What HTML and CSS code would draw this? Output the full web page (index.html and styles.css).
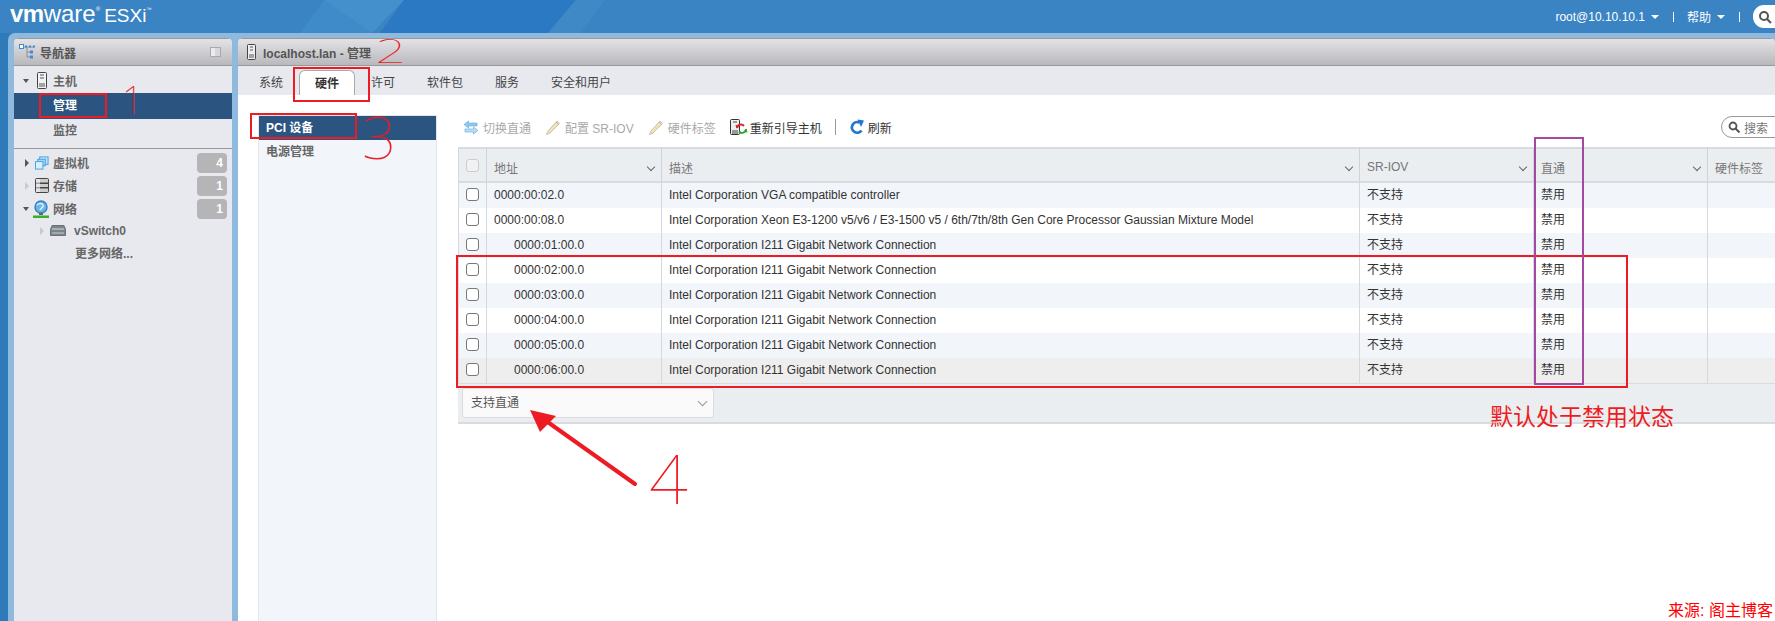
FILE: index.html
```html
<!DOCTYPE html>
<html>
<head>
  <meta charset="utf-8">
  <title>VMware ESXi</title>
  <link rel="stylesheet" href="styles.css">
</head>
<body>
  <div class="page">
    <header class="topbar">
      <svg class="topbar-art" width="1775" height="33" viewBox="0 0 1775 33">
        <polygon points="300,33 324,0 372,33" fill="#3f8bca"/>
        <polygon points="324,0 404,0 372,33" fill="#4390cd"/>
        <polygon points="404,0 576,0 548,33 380,33" fill="#2b78c3"/>
        <polygon points="576,0 605,0 580,33 548,33" fill="#3f89c6"/>
      </svg>
      <div class="logo"><span class="logo-vm">vm</span><span class="logo-ware">ware</span><span class="logo-reg">®</span><span class="logo-esxi">ESXi</span><span class="logo-tm">™</span></div>
      <div class="top-menu">
        <span class="top-item">root@10.10.10.1<i class="caret-white"></i></span>
        <span class="top-sep"></span>
        <span class="top-item">帮助<i class="caret-white"></i></span>
        <span class="top-sep"></span>
        <span class="top-search">
          <svg width="14" height="14" viewBox="0 0 14 14"><circle cx="6" cy="6" r="4" fill="none" stroke="#555" stroke-width="2"/><path d="M9 9l4 4" stroke="#555" stroke-width="2.2"/></svg>
        </span>
      </div>
    </header>

    <div class="frame">
      <aside class="panel nav-panel">
        <div class="panel-title">
          <svg class="nav-title-icon" width="17" height="16" viewBox="0 0 17 16">
            <path d="M5 3h10M8 3v10h3M8 8h3" fill="none" stroke="#8a8f98"/>
            <rect x="0.5" y="0.5" width="4" height="4" fill="#fff" stroke="#3d8bd8"/>
            <rect x="6" y="1.5" width="2" height="2" fill="#3d8bd8"/><rect x="10" y="1.5" width="2" height="2" fill="#3d8bd8"/><rect x="14" y="1.5" width="2" height="2" fill="#3d8bd8"/>
            <rect x="11" y="6.5" width="3" height="3" fill="#3d8bd8"/><rect x="11" y="11.5" width="3" height="3" fill="#3d8bd8"/>
          </svg>
          <span>导航器</span>
          <svg class="pin-icon" width="11" height="10" viewBox="0 0 11 10"><rect x="0.5" y="0.5" width="10" height="9" fill="#d8d8da" stroke="#a9a9ad"/><rect x="1" y="1" width="4" height="8" fill="#ececee"/></svg>
        </div>
        <div class="tree-group">
          <div class="tree-row">
            <i class="arrow-down"></i>
            <svg class="tree-icon" width="10" height="17" viewBox="0 0 10 17"><rect x="0.5" y="0.5" width="9" height="16" rx="1" fill="#f2f2f2" stroke="#444"/><path d="M3 3h4M3 6h4M2 12h6M2 14h6" stroke="#555"/></svg>
            <span>主机</span>
          </div>
          <div class="tree-row tree-sub active"><span>管理</span></div>
          <div class="tree-row tree-sub"><span>监控</span></div>
        </div>
        <div class="tree-group tree-group-last">
          <div class="tree-row">
            <i class="arrow-right"></i>
            <svg class="tree-icon" width="15" height="14" viewBox="0 0 15 14"><rect x="5" y="0.5" width="9" height="8" fill="#bfe2fa" stroke="#3fa0e0"/><rect x="3" y="3" width="8" height="7" fill="#a8d6f6" stroke="#3fa0e0"/><rect x="0.5" y="5.5" width="8" height="8" fill="#d9effc" stroke="#3fa0e0"/></svg>
            <span>虚拟机</span>
            <b class="count">4</b>
          </div>
          <div class="tree-row">
            <i class="arrow-right faint"></i>
            <svg class="tree-icon" width="14" height="15" viewBox="0 0 14 15"><rect x="0.5" y="0.5" width="13" height="14" rx="1" fill="#ccc" stroke="#444"/><path d="M1 5.2h12M1 9.8h12" stroke="#444" stroke-width="1.4"/><rect x="1" y="1" width="4" height="13" fill="#fff" opacity=".5"/></svg>
            <span>存储</span>
            <b class="count">1</b>
          </div>
          <div class="tree-row">
            <i class="arrow-down"></i>
            <svg class="tree-icon tree-icon-globe" width="16" height="18" viewBox="0 0 16 18"><circle cx="8" cy="7" r="6" fill="#6fb4e4" stroke="#2f80c8" stroke-width="1.4"/><path d="M4 5c2-2 5-2 6 0s-2 3-3 5" fill="none" stroke="#d7effc" stroke-width="1.6"/><path d="M6 13h4v2H6z" fill="#666"/><rect y="15.500" width="16" height="2.500" fill="#3cae2b"/></svg>
            <span>网络</span>
            <b class="count">1</b>
          </div>
          <div class="tree-row tree-child">
            <i class="arrow-right faint"></i>
            <svg class="tree-icon-wide" width="16" height="11" viewBox="0 0 16 11"><path d="M2 0.500h12l1.500 4v6H0.500v-6z" fill="#7d858c" stroke="#6a7178"/><path d="M2 4h12" stroke="#a9b0b6" stroke-width="2"/><path d="M2 8h12" stroke="#c7ccd0"/></svg>
            <span>vSwitch0</span>
          </div>
          <div class="tree-row tree-more"><span>更多网络...</span></div>
        </div>
      </aside>

      <main class="panel main-panel">
        <div class="panel-title main-title">
          <svg width="9" height="16" viewBox="0 0 9 16"><rect x="0.5" y="0.5" width="8" height="15" rx="1" fill="#eee" stroke="#444"/><path d="M3 3h3M3 6h3M2 11h5M2 13h5" stroke="#555"/></svg>
          <span>localhost.lan - 管理</span>
        </div>
        <nav class="tabs">
          <span class="tab">系统</span>
          <span class="tab tab-on">硬件</span>
          <span class="tab">许可</span>
          <span class="tab">软件包</span>
          <span class="tab">服务</span>
          <span class="tab">安全和用户</span>
        </nav>

        <div class="main-body">
          <div class="side-list">
            <div class="side-item active">PCI 设备</div>
            <div class="side-item">电源管理</div>
          </div>

          <section class="content">
            <div class="toolbar">
              <span class="tb-btn off">
                <svg width="14" height="15" viewBox="0 0 14 15"><path d="M0 4.500L4.500 1v2H13v3H4.500v2z" fill="#8fc8ee" stroke="#5eaade" stroke-width=".6"/><path d="M14 10.500L9.500 7v2H1v3h8.500v2z" fill="#b9def5" stroke="#5eaade" stroke-width=".6"/></svg>
                切换直通
              </span>
              <span class="tb-btn off">
                <svg width="14" height="15" viewBox="0 0 14 15"><path d="M11 1l2.500 2.500L4 13l-3.500 1.500L2 11z" fill="#f1e3b8" stroke="#c8c2a8"/><path d="M10 2l2.500 2.500" stroke="#b9b5a8"/></svg>
                配置 SR-IOV
              </span>
              <span class="tb-btn off">
                <svg width="14" height="15" viewBox="0 0 14 15"><path d="M11 1l2.500 2.500L4 13l-3.500 1.500L2 11z" fill="#f1e3b8" stroke="#c8c2a8"/><path d="M10 2l2.500 2.500" stroke="#b9b5a8"/></svg>
                硬件标签
              </span>
              <span class="tb-btn tb-reboot">
                <svg width="18" height="17" viewBox="0 0 18 17"><rect x="0.500" y="0.500" width="9" height="15" rx="1" fill="#eee" stroke="#333"/><path d="M2 12h6M2 14h6M3 3h4" stroke="#444"/><path d="M7 9a4 4 0 0 1 7-2" fill="none" stroke="#d9262a" stroke-width="2"/><path d="M5.500 6l4 .5-3 3z" fill="#d9262a"/><path d="M16 10a4 4 0 0 1-7 2.500" fill="none" stroke="#2fa637" stroke-width="2"/><path d="M17.500 13.500l-4-.5 3-3z" fill="#2fa637"/></svg>
                重新引导主机
              </span>
              <span class="tb-sep"></span>
              <span class="tb-btn tb-refresh">
                <svg width="16" height="16" viewBox="0 0 16 16"><path d="M12.500 11.500A5.300 5.300 0 1 1 10.500 3.600" fill="none" stroke="#1f78d1" stroke-width="2.800"/><path d="M8.500 0.500L15 1.500 12 8z" fill="#1f78d1"/></svg>
                刷新
              </span>
              <span class="tb-search">
                <svg width="12" height="12" viewBox="0 0 12 12"><circle cx="5" cy="5" r="3.500" fill="none" stroke="#555" stroke-width="1.800"/><path d="M7.500 7.500l4 4" stroke="#555" stroke-width="2"/></svg>
                搜索
              </span>
            </div>

            <table class="grid">
              <thead>
                <tr>
                  <th class="col-check"><i class="box box-head"></i></th>
                  <th class="col-addr">地址<i class="chev"></i></th>
                  <th class="col-desc">描述<i class="chev"></i></th>
                  <th class="col-sriov">SR-IOV<i class="chev"></i></th>
                  <th class="col-pass">直通<i class="chev"></i></th>
                  <th class="col-tag">硬件标签</th>
                </tr>
              </thead>
              <tbody>
                <tr><td><i class="box"></i></td><td>0000:00:02.0</td><td>Intel Corporation VGA compatible controller</td><td>不支持</td><td>禁用</td><td></td></tr>
                <tr><td><i class="box"></i></td><td>0000:00:08.0</td><td>Intel Corporation Xeon E3-1200 v5/v6 / E3-1500 v5 / 6th/7th/8th Gen Core Processor Gaussian Mixture Model</td><td>不支持</td><td>禁用</td><td></td></tr>
                <tr><td><i class="box"></i></td><td class="indent">0000:01:00.0</td><td>Intel Corporation I211 Gigabit Network Connection</td><td>不支持</td><td>禁用</td><td></td></tr>
                <tr><td><i class="box"></i></td><td class="indent">0000:02:00.0</td><td>Intel Corporation I211 Gigabit Network Connection</td><td>不支持</td><td>禁用</td><td></td></tr>
                <tr><td><i class="box"></i></td><td class="indent">0000:03:00.0</td><td>Intel Corporation I211 Gigabit Network Connection</td><td>不支持</td><td>禁用</td><td></td></tr>
                <tr><td><i class="box"></i></td><td class="indent">0000:04:00.0</td><td>Intel Corporation I211 Gigabit Network Connection</td><td>不支持</td><td>禁用</td><td></td></tr>
                <tr><td><i class="box"></i></td><td class="indent">0000:05:00.0</td><td>Intel Corporation I211 Gigabit Network Connection</td><td>不支持</td><td>禁用</td><td></td></tr>
                <tr class="hover"><td><i class="box"></i></td><td class="indent">0000:06:00.0</td><td>Intel Corporation I211 Gigabit Network Connection</td><td>不支持</td><td>禁用</td><td></td></tr>
              </tbody>
            </table>

            <div class="grid-foot">
              <div class="select">支持直通<i class="chev chev-select"></i></div>
            </div>
          </section>
        </div>
      </main>
    </div>

    <!-- red pen marks drawn on top of the screenshot -->
    <div class="marks">
      <div class="mark mark-manage"></div>
      <div class="mark mark-tab"></div>
      <div class="mark mark-pci"></div>
      <div class="mark mark-rows"></div>
      <div class="mark mark-pass"></div>
      <svg class="mark-arrow" width="120" height="85" viewBox="0 0 120 85">
        <path d="M107 74L14 8" stroke="#ed1c24" stroke-width="4" stroke-linecap="round"/>
        <path d="M2 0L28 6 12 22z" fill="#ed1c24"/>
      </svg>
      <span class="pen pen-1">1</span>
      <span class="pen pen-2">2</span>
      <span class="pen pen-3">3</span>
      <span class="pen pen-4">4</span>
      <span class="note">默认处于禁用状态</span>
      <span class="source">来源: 阁主博客</span>
    </div>
  </div>
</body>
</html>
```

FILE: styles.css
```css
html, body {
  margin: 0;
  padding: 0;
  height: 100%;
  overflow: hidden;
}

body {
  font-family: "Liberation Sans", "Noto Sans CJK SC", sans-serif;
  font-size: 12px;
  color: #333;
  background: #fff;
}

.page {
  position: relative;
  height: 621px;
  display: flex;
  flex-direction: column;
  background: #2f7ab8;
  overflow: hidden;
}

/* top bar */
.topbar {
  position: relative;
  height: 33px;
  flex: none;
  background: #3a84c3;
  color: #fff;
  display: flex;
  align-items: center;
  justify-content: space-between;
}

.topbar-art {
  position: absolute;
  left: 0;
  top: 0;
}

.logo {
  position: relative;
  margin-left: 10px;
  padding-bottom: 3px;
  display: flex;
  align-items: baseline;
  line-height: 26px;
}

.logo-vm {
  font-size: 24px;
  font-weight: 700;
  letter-spacing: -0.5px;
}

.logo-ware {
  font-size: 24px;
}

.logo-reg {
  font-size: 6px;
  align-self: flex-start;
  line-height: 16px;
}

.logo-esxi {
  font-size: 19px;
  margin-left: 4px;
}

.logo-tm {
  font-size: 5px;
  align-self: flex-start;
  line-height: 16px;
}

.top-menu {
  position: relative;
  display: flex;
  align-items: center;
}

.top-item {
  display: flex;
  align-items: center;
  gap: 6px;
  color: #fff;
}

.caret-white {
  width: 0;
  height: 0;
  border-left: 4px solid transparent;
  border-right: 4px solid transparent;
  border-top: 4px solid #fff;
}

.top-sep {
  width: 1px;
  height: 10px;
  background: #fff;
  margin: 0 13px 0 14px;
}

.top-search {
  width: 30px;
  height: 23px;
  box-sizing: border-box;
  margin-right: -8px;
  background: #fff;
  border-radius: 11px 0 0 11px;
  display: flex;
  align-items: center;
  padding-left: 5px;
}

/* frame round both panels */
.frame {
  flex: 1;
  min-height: 0;
  margin-left: 8px;
  padding: 5px 0 0 6px;
  background: #90b9de;
  border-radius: 7px 0 0 0;
  display: flex;
  gap: 6px;
}

.panel {
  background: #e8e9ef;
  border-radius: 5px 5px 0 0;
  display: flex;
  flex-direction: column;
  min-width: 0;
  overflow: hidden;
}

.panel-title {
  height: 26px;
  flex: none;
  display: flex;
  align-items: center;
  font-weight: bold;
  color: #555;
  background: linear-gradient(#e3e3e6, #b9b9bd);
  border-top: 1px solid #999;
  border-bottom: 1px solid #999;
}

/* navigator */
.nav-panel {
  width: 218px;
  flex: none;
}

.nav-title-icon {
  margin: 0 4px 0 5px;
}

.pin-icon {
  margin-left: auto;
  margin-right: 11px;
}

.tree-group {
  padding: 4px 0;
  border-bottom: 1px solid #999;
  height: 74px;
}

.tree-group-last {
  border-bottom: none;
  padding-top: 3px;
  height: auto;
}

.tree-row {
  height: 23px;
  box-sizing: border-box;
  padding: 0 5px 2px 9px;
  display: flex;
  align-items: center;
  font-weight: bold;
  color: #666;
}

.tree-sub {
  height: 26px;
  padding-left: 39px;
  padding-bottom: 4px;
}

.tree-sub.active {
  background: #2b5480;
  color: #fff;
}

.tree-sub + .tree-sub {
  height: 24px;
}

.arrow-down, .arrow-right {
  display: block;
  width: 12px;
  flex: none;
  position: relative;
  height: 10px;
}

.arrow-down::before {
  content: "";
  position: absolute;
  left: 0;
  top: 3px;
  border-left: 3.5px solid transparent;
  border-right: 3.5px solid transparent;
  border-top: 4px solid #555;
}

.arrow-right::before {
  content: "";
  position: absolute;
  left: 2px;
  top: 1px;
  border-top: 4px solid transparent;
  border-bottom: 4px solid transparent;
  border-left: 4px solid #555;
}

.arrow-right.faint::before {
  border-left-color: #c8c9ce;
}

.tree-icon {
  flex: none;
  width: 18px;
  padding-right: 4px;
  box-sizing: border-box;
}

.tree-icon-globe {
  margin-left: -2px;
  width: 20px;
}

.tree-icon-wide {
  flex: none;
  width: 24px;
  padding-right: 8px;
  box-sizing: border-box;
}

.tree-child {
  padding-left: 24px;
  margin-top: -1px;
}

.tree-more {
  padding-left: 61px;
  margin-top: -1px;
}

.count {
  margin-left: auto;
  width: 30px;
  height: 20px;
  box-sizing: border-box;
  background: #b5b5b8;
  border-radius: 4px;
  color: #fff;
  text-align: right;
  padding-right: 4px;
  line-height: 20px;
  font-size: 12px;
}

/* main */
.main-panel {
  flex: 1;
}

.main-title {
  padding-left: 9px;
  gap: 7px;
}

.tabs {
  height: 29px;
  flex: none;
  padding-left: 5px;
  display: flex;
  align-items: flex-end;
}

.tab {
  height: 25px;
  box-sizing: border-box;
  padding: 0 16px;
  line-height: 27px;
  color: #444;
}

.tab-on {
  background: #fff;
  border: 1px solid #aaa;
  border-bottom: none;
  border-radius: 6px 6px 0 0;
  padding: 0 15px;
  line-height: 26px;
  font-weight: bold;
  color: #333;
}

.main-body {
  flex: 1;
  min-height: 0;
  background: #fff;
  padding-top: 20px;
  display: flex;
}

.side-list {
  width: 179px;
  flex: none;
  margin-left: 20px;
  box-sizing: border-box;
  background: #f2f5fa;
  border: 1px solid #e2e6ec;
  border-bottom: none;
}

.side-item {
  height: 24px;
  line-height: 24px;
  padding-left: 7px;
  font-weight: bold;
  color: #666;
}

.side-item.active {
  background: #2b5480;
  color: #fff;
}

.content {
  flex: 1;
  min-width: 0;
  padding-left: 21px;
}

.toolbar {
  height: 24px;
  margin-bottom: 8px;
  padding-left: 6px;
  display: flex;
  align-items: center;
}

.tb-btn {
  display: flex;
  align-items: center;
  gap: 5px;
  margin-right: 15px;
  white-space: nowrap;
}

.tb-btn.off {
  color: #a9a9a9;
}

.tb-reboot {
  gap: 2px;
  margin-right: 0;
  margin-left: -1px;
}

.tb-refresh {
  gap: 3px;
  margin-right: 0;
}

.tb-sep {
  width: 1px;
  height: 16px;
  background: #999;
  margin: 0 13px;
}

.tb-search {
  margin-left: auto;
  margin-right: -12px;
  width: 66px;
  height: 22px;
  box-sizing: border-box;
  border: 1px solid #999;
  border-radius: 11px 0 0 11px;
  padding-left: 6px;
  display: flex;
  align-items: center;
  gap: 4px;
  color: #777;
}

/* pci table */
.grid {
  width: 1317px;
  table-layout: fixed;
  border-collapse: separate;
  border-spacing: 0;
  border-left: 1px solid #d5d8dc;
}

.grid th {
  position: relative;
  height: 28px;
  padding: 4px 7px 0;
  box-sizing: content-box;
  font-weight: normal;
  text-align: left;
  color: #777;
  background: #ebeef1;
  border-top: 2px solid #d9dbde;
  border-bottom: 2px solid #d9dbde;
  border-right: 1px solid #cfd2d6;
}

.grid td {
  height: 25px;
  padding: 0 7px;
  line-height: 25px;
  white-space: nowrap;
  overflow: hidden;
  border-right: 1px solid #d5d8dc;
}

.grid tbody tr:nth-child(odd) td {
  background: #f2f5fa;
}

.grid tbody tr.hover td {
  background: #eeeeee;
}

.grid td.indent {
  padding-left: 27px;
}

.col-check { width: 11px; }
.col-addr { width: 160px; }
.col-desc { width: 683px; }
.col-sriov { width: 159px; }
.col-pass { width: 159px; }
.col-tag { width: 53px; }

.grid th.col-check, .grid td:first-child {
  padding: 0 0 0 7px;
  width: 20px;
}

.box {
  display: block;
  width: 11px;
  height: 11px;
  margin-top: -3px;
  border: 1px solid #777;
  border-radius: 3px;
  background: #fff;
}

.box-head {
  margin-top: 0;
  border-color: #ccc;
  background: #f0f2f4;
}

.chev {
  position: absolute;
  right: 7px;
  top: 15px;
  width: 5px;
  height: 5px;
  border-right: 1px solid #666;
  border-bottom: 1px solid #666;
  transform: rotate(45deg);
}

.grid-foot {
  height: 41px;
  padding: 4px 0 0 4px;
  box-sizing: border-box;
  background: #ebeef1;
  border-top: 1px solid #d9dbde;
  border-bottom: 2px solid #d9dbde;
}

.select {
  position: relative;
  width: 252px;
  height: 30px;
  box-sizing: border-box;
  background: #fafafa;
  border: 1px solid #dcdcdc;
  border-radius: 3px;
  line-height: 29px;
  padding-left: 8px;
  color: #555;
}

.chev-select {
  top: 9px;
  right: 7px;
  width: 6px;
  height: 6px;
  border-color: #999;
}

/* annotations on top of everything */
.marks {
  position: absolute;
  left: 0;
  top: 0;
  width: 100%;
  height: 100%;
  pointer-events: none;
}

.mark {
  position: absolute;
  box-sizing: border-box;
  border: 2px solid #ed1c24;
}

.mark-manage { left: 39px; top: 93px; width: 68px; height: 25px; }
.mark-tab { left: 293px; top: 67px; width: 77px; height: 35px; }
.mark-pci { left: 250px; top: 113px; width: 107px; height: 26px; }
.mark-rows { left: 456px; top: 255px; width: 1172px; height: 133px; }
.mark-pass { left: 1534px; top: 137px; width: 50px; height: 248px; border-color: #a349a4; }

.mark-arrow {
  position: absolute;
  left: 528px;
  top: 410px;
}

.pen {
  position: absolute;
  font-family: "Noto Sans", sans-serif;
  font-weight: 100;
  color: #ed1c24;
  line-height: 1;
}

.pen-1 { left: 122px; top: 80px; font-size: 38px; }
.pen-2 { left: 381px; top: 33px; font-size: 34px; transform: scaleX(1.6); }
.pen-3 { left: 362px; top: 106px; font-size: 60px; }
.pen-4 { left: 649px; top: 444px; font-size: 68px; }

.note {
  position: absolute;
  left: 1490px;
  top: 401px;
  font-size: 23px;
  line-height: 32px;
  color: #ed1c24;
  white-space: nowrap;
}

.source {
  position: absolute;
  left: 1668px;
  top: 601px;
  font-size: 16px;
  line-height: 20px;
  color: #ff0000;
  white-space: nowrap;
}
```
